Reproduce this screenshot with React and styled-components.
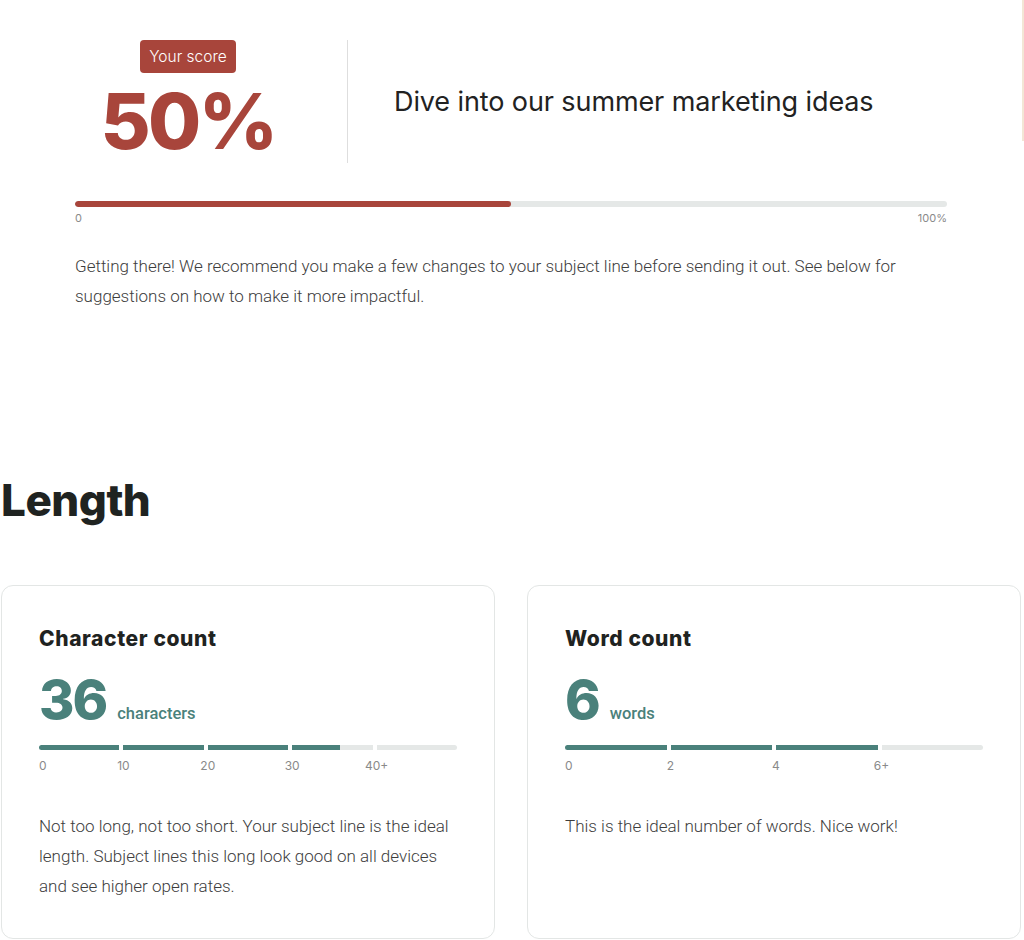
import React from 'react';
import styled, { createGlobalStyle } from 'styled-components';

const GlobalStyle = createGlobalStyle`
  body {
    margin: 0;
    background: #fff;
    font-family: Roboto, "Liberation Sans", sans-serif;
  }
`;

const Page = styled.div`
  display: flex;
  width: 1024px;
`;

const Main = styled.main`
  flex: 1;
  padding: 0 1px;
`;

const EdgeStrip = styled.div`
  width: 2px;
  height: 141px;
  background: #f3e6d6;
`;

const ScoreSection = styled.section`
  padding: 40px 74px 0 74px;
`;

const ScoreRow = styled.div`
  display: flex;
  align-items: center;
`;

const ScoreCol = styled.div`
  width: 226px;
  margin-right: 46px;
  display: flex;
  flex-direction: column;
  align-items: center;
`;

const Badge = styled.span`
  background: #a8453b;
  color: #fff;
  font-family: Inter, sans-serif;
  font-weight: 300;
  font-size: 15.5px;
  line-height: 33px;
  padding: 0 9px;
  border-radius: 4px;
`;

const Score = styled.div`
  margin-top: 6px;
  font-family: Inter, sans-serif;
  font-weight: 800;
  font-size: 77px;
  letter-spacing: -2.5px;
  line-height: 84px;
  color: #a8453b;
`;

const Divider = styled.div`
  align-self: stretch;
  width: 1px;
  background: #dedede;
`;

const Subject = styled.h1`
  margin: 0 0 0 46px;
  font-family: Inter, sans-serif;
  font-weight: 400;
  font-size: 27px;
  letter-spacing: -0.1px;
  color: #222;
`;

const Track = styled.div`
  margin-top: 38px;
  height: 6px;
  border-radius: 3px;
  background: #e5e8e7;
  overflow: hidden;
`;

const TrackFill = styled.div`
  height: 100%;
  background: ${(p) => p.$color};
  border-radius: 3px;
`;

const Scale = styled.div`
  display: flex;
  justify-content: space-between;
  margin-top: 4px;
  font-family: Inter, sans-serif;
  font-size: 11px;
  color: #8a8a8a;
`;

const Body = styled.p`
  margin: ${(p) => p.$margin || '0'};
  font-family: Roboto, sans-serif;
  font-weight: 300;
  font-size: 17px;
  line-height: 30px;
  color: #3d3d3d;
`;

const SectionTitle = styled.h2`
  margin: 162px 0 58px 0;
  font-family: Inter, sans-serif;
  font-weight: 800;
  font-size: 44px;
  letter-spacing: -0.5px;
  color: #1f2321;
`;

const CardGrid = styled.div`
  display: grid;
  grid-template-columns: 1fr 1fr;
  gap: 32px;
`;

const Card = styled.div`
  border: 1px solid #e3e6e5;
  border-radius: 12px;
  padding: 40px 37px 37px 37px;
`;

const CardTitle = styled.h3`
  margin: 0;
  font-family: Inter, sans-serif;
  font-weight: 800;
  font-size: 21px;
  letter-spacing: 0.6px;
  color: #1f2321;
`;

const CountRow = styled.div`
  display: flex;
  align-items: baseline;
  gap: 11px;
  margin-top: 16px;
  color: #4a817b;
`;

const CountValue = styled.span`
  font-family: Inter, sans-serif;
  font-weight: 800;
  font-size: 54px;
  line-height: 66px;
  letter-spacing: -2px;
`;

const CountUnit = styled.span`
  font-family: Roboto, sans-serif;
  font-weight: 500;
  font-size: 16.5px;
`;

const SegGrid = styled.div`
  display: grid;
  grid-template-columns: repeat(${(p) => p.$count}, 1fr);
  column-gap: 4px;
  margin-top: 12px;
`;

const Segment = styled.div`
  height: 5px;
  background: #e5e8e7;
  overflow: hidden;
  &:first-child { border-radius: 3px 0 0 3px; }
  &:last-child { border-radius: 0 3px 3px 0; }
`;

const SegFill = styled.div`
  height: 100%;
  background: #4a817b;
`;

const SegLabels = styled.div`
  display: grid;
  grid-template-columns: repeat(${(p) => p.$count}, 1fr);
  column-gap: 4px;
  margin-top: 8px;
  font-family: Inter, sans-serif;
  font-size: 12px;
  color: #8a8a8a;
`;

const SegLabel = styled.span`
  transform: translateX(${(p) => (p.$first ? '0' : '-50%')});
  justify-self: start;
`;

const SegmentBar = ({ fills, labels }) => (
  <>
    <SegGrid $count={fills.length}>
      {fills.map((f, i) => (
        <Segment key={i}>
          <SegFill style={{ width: `${f * 100}%` }} />
        </Segment>
      ))}
    </SegGrid>
    <SegLabels $count={fills.length}>
      {labels.map((l, i) => (
        <SegLabel key={i} $first={i === 0}>{l}</SegLabel>
      ))}
    </SegLabels>
  </>
);

const MetricCard = ({ title, value, unit, fills, labels, text }) => (
  <Card>
    <CardTitle>{title}</CardTitle>
    <CountRow>
      <CountValue>{value}</CountValue>
      <CountUnit>{unit}</CountUnit>
    </CountRow>
    <SegmentBar fills={fills} labels={labels} />
    <Body $margin="38px 0 0 0">{text}</Body>
  </Card>
);

const App = () => {
  const score = 50;
  return (
    <Page>
      <GlobalStyle />
      <Main>
        <ScoreSection>
          <ScoreRow>
            <ScoreCol>
              <Badge>Your score</Badge>
              <Score>{score}%</Score>
            </ScoreCol>
            <Divider />
            <Subject>Dive into our summer marketing ideas</Subject>
          </ScoreRow>
          <Track>
            <TrackFill $color="#a8453b" style={{ width: `${score}%` }} />
          </Track>
          <Scale>
            <span>0</span>
            <span>100%</span>
          </Scale>
          <Body $margin="26px 0 0 0">
            Getting there! We recommend you make a few changes to your subject line before
            sending it out. See below for suggestions on how to make it more impactful.
          </Body>
        </ScoreSection>

        <SectionTitle>Length</SectionTitle>

        <CardGrid>
          <MetricCard
            title="Character count"
            value="36"
            unit="characters"
            fills={[1, 1, 1, 0.6, 0]}
            labels={['0', '10', '20', '30', '40+']}
            text="Not too long, not too short. Your subject line is the ideal length. Subject lines this long look good on all devices and see higher open rates."
          />
          <MetricCard
            title="Word count"
            value="6"
            unit="words"
            fills={[1, 1, 1, 0]}
            labels={['0', '2', '4', '6+']}
            text="This is the ideal number of words. Nice work!"
          />
        </CardGrid>
      </Main>
      <EdgeStrip />
    </Page>
  );
};

export default App;
